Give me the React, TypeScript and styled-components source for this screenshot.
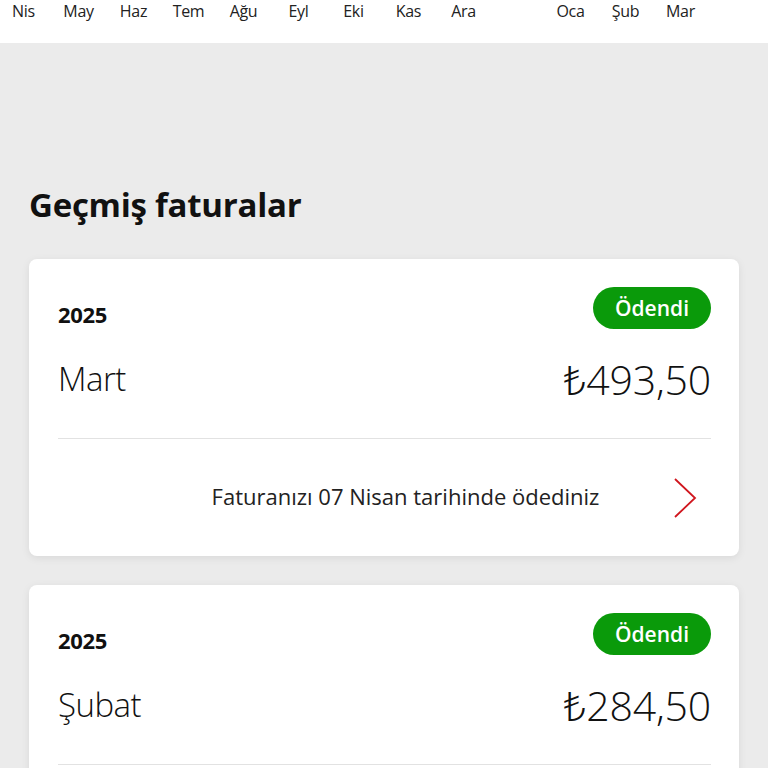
import React from "react";
import styled, { createGlobalStyle } from "styled-components";

const Global = createGlobalStyle`
  html, body { margin: 0; padding: 0; background: #ebebeb; }
  body { font-family: "Open Sans", "Noto Sans", sans-serif; color: #111; }
  * { box-sizing: border-box; }
`;

const Page = styled.div`
  width: 768px;
  height: 768px;
  overflow: hidden;
  background: #ebebeb;
  display: flex;
  flex-direction: column;
`;

const MonthBar = styled.div`
  height: 43px;
  background: #fff;
  display: flex;
  align-items: flex-start;
  padding-left: 0;
  flex-shrink: 0;
  & > :first-child { margin-left: -4px; }
`;

const Month = styled.div<{ $w?: number }>`
  width: ${(p) => p.$w ?? 55}px;
  flex-shrink: 0;
  text-align: center;
  font-size: 16px;
  line-height: 24px;
  margin-top: -1px;
  color: #222;
  letter-spacing: -0.3px;
`;

const Content = styled.div`
  padding: 140px 29px 0 29px;
  display: flex;
  flex-direction: column;
`;

const Title = styled.h1`
  margin: 0 0 32px 0;
  font-size: 33px;
  line-height: 44px;
  font-weight: 700;
  letter-spacing: -0.25px;
  color: #111;
`;

const Card = styled.div`
  background: #fff;
  border-radius: 8px;
  box-shadow: 0 2px 8px rgba(0, 0, 0, 0.08);
  padding: 28px 28px 0 29px;
  margin-bottom: 29px;
`;

const Row = styled.div<{ $mt?: number }>`
  display: flex;
  justify-content: space-between;
  align-items: center;
  margin-top: ${(p) => p.$mt ?? 0}px;
`;

const Year = styled.div`
  font-size: 22px;
  line-height: 30px;
  font-weight: 700;
  letter-spacing: -0.3px;
  margin-top: 12px;
`;

const Badge = styled.div`
  background: #0a9a0a;
  color: #fff;
  height: 42px;
  border-radius: 21px;
  padding: 0 22px;
  display: flex;
  align-items: center;
  font-size: 21px;
  font-weight: 600;
  letter-spacing: 0;
`;

const MonthName = styled.div`
  font-size: 33px;
  font-weight: 300;
  letter-spacing: -0.5px;
  line-height: 48px;
`;

const Amount = styled.div`
  font-size: 41px;
  font-weight: 300;
  letter-spacing: -0.2px;
  line-height: 48px;
`;

const Divider = styled.div`
  height: 1px;
  background: #e2e2e2;
  margin-top: 35px;
`;

const Footer = styled.div`
  height: 117px;
  padding-bottom: 4px;
  display: flex;
  align-items: center;
  justify-content: flex-end;
`;

const FooterText = styled.div`
  flex: 1;
  text-align: center;
  font-size: 22px;
  letter-spacing: 0;
  color: #222;
  padding-left: 82px;
`;

const Chevron = styled.svg`
  width: 28px;
  height: 42px;
  margin-right: 12px;
  margin-top: 4px;
  flex-shrink: 0;
`;

const months = ["Nis", "May", "Haz", "Tem", "Ağu", "Eyl", "Eki", "Kas", "Ara", "", "Oca", "Şub", "Mar"];

type Bill = { year: string; month: string; amount: string; note: string };
const bills: Bill[] = [
  { year: "2025", month: "Mart", amount: "₺493,50", note: "Faturanızı 07 Nisan tarihinde ödediniz" },
  { year: "2025", month: "Şubat", amount: "₺284,50", note: "Faturanızı 07 Mart tarihinde ödediniz" },
];

export default function App() {
  return (
    <Page>
      <Global />
      <MonthBar>
        {months.map((m, i) => (
          <Month key={i} $w={m === "" ? 52 : 55}>
            {m}
          </Month>
        ))}
      </MonthBar>
      <Content>
        <Title>Geçmiş faturalar</Title>
        {bills.map((b, i) => (
          <Card key={i}>
            <Row>
              <Year>{b.year}</Year>
              <Badge>Ödendi</Badge>
            </Row>
            <Row $mt={26}>
              <MonthName>{b.month}</MonthName>
              <Amount>{b.amount}</Amount>
            </Row>
            <Divider />
            <Footer>
              <FooterText>{b.note}</FooterText>
              <Chevron viewBox="0 0 28 42">
                <path d="M4 2 L24 21 L4 40" fill="none" stroke="#d0161e" strokeWidth="1.8" />
              </Chevron>
            </Footer>
          </Card>
        ))}
      </Content>
    </Page>
  );
}
